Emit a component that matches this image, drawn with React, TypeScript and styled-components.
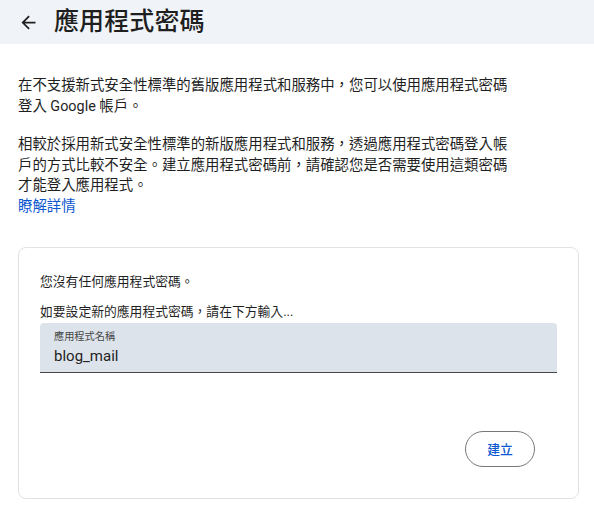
import styled, { createGlobalStyle } from "styled-components";

const GlobalStyle = createGlobalStyle`
  body {
    margin: 0;
    background: #ffffff;
    font-family: Roboto, "Noto Sans CJK TC", sans-serif;
    color: #1f1f1f;
  }
`;

const App = () => {
  return (
    <Page>
      <GlobalStyle />
      <Header>
        <BackButton aria-label="返回">
          <svg width="21" height="21" viewBox="0 0 24 24">
            <path
              d="M20 11H7.83l5.59-5.59L12 4l-8 8 8 8 1.41-1.41L7.83 13H20v-2z"
              fill="#1f1f1f"
            />
          </svg>
        </BackButton>
        <Title>應用程式密碼</Title>
      </Header>

      <Content>
        <Para>
          在不支援新式安全性標準的舊版應用程式和服務中，您可以使用應用程式密碼登入 Google 帳戶。
        </Para>
        <Para>
          相較於採用新式安全性標準的新版應用程式和服務，透過應用程式密碼登入帳戶的方式比較不安全。建立應用程式密碼前，請確認您是否需要使用這類密碼才能登入應用程式。
          <br />
          <MoreLink href="#">瞭解詳情</MoreLink>
        </Para>

        <Card>
          <CardText>您沒有任何應用程式密碼。</CardText>
          <CardText $gap>如要設定新的應用程式密碼，請在下方輸入...</CardText>
          <Field>
            <FieldLabel>應用程式名稱</FieldLabel>
            <FieldInput defaultValue="blog_mail" />
          </Field>
          <Actions>
            <CreateButton>建立</CreateButton>
          </Actions>
        </Card>
      </Content>
    </Page>
  );
};

export default App;

const Page = styled.div`
  width: 594px;
  min-height: 514px;
  overflow: hidden;
`;

const Header = styled.header`
  height: 44px;
  background: #f0f4f9;
  display: flex;
  align-items: center;
  padding-left: 18px;
  box-sizing: border-box;
`;

const BackButton = styled.button`
  border: 0;
  background: transparent;
  padding: 0;
  width: 21px;
  height: 21px;
  margin-top: 1px;
  display: flex;
  align-items: center;
  justify-content: center;
  cursor: pointer;
`;

const Title = styled.h1`
  margin: 0 0 0 15px;
  font-size: 25px;
  font-weight: 500;
  line-height: 30px;
  color: #1f1f1f;
  letter-spacing: 0.1px;
`;

const Content = styled.main`
  padding: 32px 15px 0 18px;
`;

const Para = styled.p`
  margin: 0 0 18px;
  max-width: 500px;
  font-size: 14.4px;
  line-height: 20.6px;
  color: #1f1f1f;
`;

const MoreLink = styled.a`
  color: #0b57d0;
  text-decoration: none;
`;

const Card = styled.section`
  margin-top: 29px;
  border: 1px solid #e1e3e1;
  border-radius: 8px;
  padding: 24px 21px 31px;
`;

const CardText = styled.p<{ $gap?: boolean }>`
  margin: ${(p) => (p.$gap ? "10px 0 1px" : "0")};
  font-size: 12.8px;
  line-height: 20px;
  color: #1f1f1f;
`;

const Field = styled.label`
  display: flex;
  flex-direction: column;
  height: 50px;
  box-sizing: border-box;
  background: #dde3ea;
  border-radius: 4px 4px 0 0;
  border-bottom: 1px solid #444746;
  padding: 7px 14px 0;
`;

const FieldLabel = styled.span`
  font-size: 10.2px;
  line-height: 14px;
  color: #444746;
`;

const FieldInput = styled.input`
  border: 0;
  outline: none;
  background: transparent;
  padding: 0;
  margin-top: 2px;
  font-family: Roboto, "Noto Sans CJK TC", sans-serif;
  font-size: 15px;
  line-height: 20px;
  color: #1f1f1f;
`;

const Actions = styled.div`
  display: flex;
  justify-content: flex-end;
  padding-right: 22px;
  margin-top: 58px;
`;

const CreateButton = styled.button`
  width: 70px;
  height: 36px;
  border-radius: 18px;
  border: 1px solid #747775;
  background: #ffffff;
  color: #0b57d0;
  font-family: Roboto, "Noto Sans CJK TC", sans-serif;
  font-size: 12.8px;
  font-weight: 500;
  cursor: pointer;
`;
